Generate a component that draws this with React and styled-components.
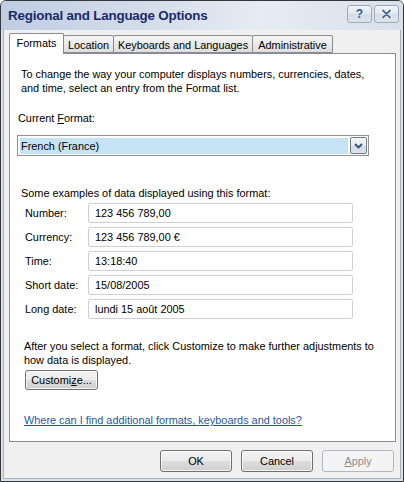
import React from "react";
import styled, { createGlobalStyle } from "styled-components";

const Global = createGlobalStyle`
  html, body { margin: 0; padding: 0; background: #ffffff; }
  body { font-family: "Liberation Sans", Arial, sans-serif; font-size: 10.9px; color: #000; }
  * { box-sizing: border-box; }
`;

const Window = styled.div`
  width: 404px;
  height: 482px;
  border: 1px solid #34383d;
  border-radius: 6px 6px 0 0;
  background: #d9e1eb;
  padding: 0 2px 2px 2px;
  display: flex;
  flex-direction: column;
  overflow: hidden;
`;

const TitleBar = styled.div`
  height: 29px;
  margin: 0 -2px;
  padding: 4px 4px 0 7px;
  display: flex;
  align-items: flex-start;
  justify-content: space-between;
  background: linear-gradient(90deg, #bfcde3 0%, #d3dcea 35%, #e7ecf3 65%, #d7e0eb 100%);
`;

const Title = styled.div`
  margin-top: 2px;
  font-size: 13.4px;
  line-height: 17px;
  font-weight: bold;
  letter-spacing: -0.2px;
  color: #1c2b66;
  white-space: nowrap;
`;

const Caption = styled.div`
  display: flex;
  gap: 2px;
`;

const CapButton = styled.div`
  width: 25px;
  height: 18px;
  border: 1px solid #9ea9b8;
  border-radius: 3px;
  background: linear-gradient(180deg, #f1f4f8 0%, #e1e7ef 50%, #d4dce7 51%, #dde4ec 100%);
  display: flex;
  align-items: center;
  justify-content: center;
  font-size: 12px;
  font-weight: bold;
  color: #2a5aa8;
  line-height: 1;
`;

const Client = styled.div`
  flex: 1;
  background: #f0f0f0;
  border: 1px solid #a9b2bd;
  border-top: none;
  padding: 3px 4px 6px 5px;
  display: flex;
  flex-direction: column;
`;

const TabRow = styled.div`
  display: flex;
  align-items: flex-end;
  height: 21px;
  margin-bottom: -1px;
  position: relative;
  z-index: 1;
`;

const Tab = styled.div`
  width: ${(p) => p.$w}px;
  height: ${(p) => (p.$active ? 21 : 18)}px;
  margin-bottom: ${(p) => (p.$active ? 0 : 1)}px;
  margin-left: ${(p) => (p.$first ? 0 : -1)}px;
  border: 1px solid #898c95;
  border-bottom: ${(p) => (p.$active ? "none" : "1px solid #898c95")};
  border-radius: 2px 2px 0 0;
  background: ${(p) =>
    p.$active ? "#ffffff" : "linear-gradient(180deg, #f5f5f5 0%, #ebebeb 50%, #dedede 100%)"};
  position: relative;
  z-index: ${(p) => (p.$active ? 2 : 1)};
  padding-top: 2px;
  text-align: center;
  line-height: 14px;
  white-space: nowrap;
`;

const Panel = styled.div`
  height: 389px;
  background: #ffffff;
  border: 1px solid #898c95;
  display: flex;
  flex-direction: column;
  align-items: flex-start;
`;

const Text = styled.div`
  margin-top: ${(p) => p.$mt}px;
  margin-left: ${(p) => p.$ml}px;
  line-height: 14px;
  white-space: nowrap;
`;

const Combo = styled.div`
  margin-top: 10px;
  margin-left: 7px;
  width: 352px;
  height: 21px;
  border: 1px solid #8e9196;
  background: #fff;
  padding: 1px 1px 1px 2px;
  display: flex;
  align-items: stretch;
  gap: 2px;
`;

const ComboValue = styled.div`
  flex: 1;
  margin-top: 1px;
  background: #c6e3f6;
  padding-left: 1px;
  line-height: 16px;
`;

const ComboArrow = styled.div`
  width: 17px;
  border: 1px solid #6f7c8c;
  border-radius: 2px;
  background: linear-gradient(180deg, #f6f7f9 0%, #e7eaee 50%, #d1d6dd 51%, #dfe3e8 100%);
  display: flex;
  align-items: center;
  justify-content: center;
`;

const Fields = styled.div`
  margin-top: 3px;
  margin-left: 15px;
  display: flex;
  flex-direction: column;
  gap: 4px;
`;

const FieldRow = styled.div`
  display: flex;
  align-items: center;
`;

const FieldLabel = styled.div`
  width: 63px;
  white-space: nowrap;
`;

const FieldBox = styled.div`
  width: 265px;
  height: 20px;
  border: 1px solid #cdd0d5;
  border-radius: 2px;
  background: #fff;
  padding-left: 6px;
  line-height: 18px;
  white-space: nowrap;
`;

const Button = styled.div`
  width: ${(p) => p.$w}px;
  height: ${(p) => p.$h}px;
  margin-top: ${(p) => p.$mt || 0}px;
  margin-left: ${(p) => p.$ml || 0}px;
  border: 1px solid ${(p) => (p.$disabled ? "#b4b8bc" : "#707070")};
  border-radius: 3px;
  background: ${(p) =>
    p.$disabled
      ? "#f4f4f4"
      : "linear-gradient(180deg, #f3f3f3 0%, #ebebeb 48%, #dddddd 52%, #cfcfcf 100%)"};
  box-shadow: inset 0 0 0 1px ${(p) => (p.$disabled ? "#f4f4f4" : "rgba(255,255,255,0.75)")};
  color: ${(p) => (p.$disabled ? "#8d8d8d" : "#000")};
  display: flex;
  align-items: center;
  justify-content: center;
  white-space: nowrap;
`;

const Link = styled.div`
  margin-top: 23px;
  margin-left: 14px;
  line-height: 14px;
  color: #1f56a6;
  text-decoration: underline;
  white-space: nowrap;
`;

const ButtonRow = styled.div`
  margin-top: 8px;
  display: flex;
  justify-content: flex-end;
  gap: 9px;
  padding-right: 2px;
`;

const fields = [
  ["Number:", "123 456 789,00"],
  ["Currency:", "123 456 789,00 €"],
  ["Time:", "13:18:40"],
  ["Short date:", "15/08/2005"],
  ["Long date:", "lundi 15 août 2005"],
];

const tabs = [
  { label: "Formats", w: 55, active: true },
  { label: "Location", w: 51 },
  { label: "Keyboards and Languages", w: 140 },
  { label: "Administrative", w: 81 },
];

export default function App() {
  return (
    <>
      <Global />
      <Window>
        <TitleBar>
          <Title>Regional and Language Options</Title>
          <Caption>
            <CapButton>?</CapButton>
            <CapButton>
              <svg width="11" height="10" viewBox="0 0 11 10">
                <path d="M2 1.5 L9 8.5 M9 1.5 L2 8.5" stroke="#ffffff" strokeWidth="3.6" strokeLinecap="round" />
                <path d="M2 1.5 L9 8.5 M9 1.5 L2 8.5" stroke="#4a6a98" strokeWidth="2" strokeLinecap="round" />
              </svg>
            </CapButton>
          </Caption>
        </TitleBar>
        <Client>
          <TabRow>
            {tabs.map((t, i) => (
              <Tab key={t.label} $w={t.w} $active={t.active} $first={i === 0}>
                {t.label}
              </Tab>
            ))}
          </TabRow>
          <Panel>
            <Text $mt={13} $ml={11}>
              To change the way your computer displays numbers, currencies, dates,
              <br />
              and time, select an entry from the Format list.
            </Text>
            <Text $mt={16} $ml={8}>
              Current <u>F</u>ormat:
            </Text>
            <Combo>
              <ComboValue>French (France)</ComboValue>
              <ComboArrow>
                <svg width="9" height="6" viewBox="0 0 9 6">
                  <path d="M1 1 L4.5 4.5 L8 1" fill="none" stroke="#2f4d7e" strokeWidth="1.8" />
                </svg>
              </ComboArrow>
            </Combo>
            <Text $mt={30} $ml={11}>
              Some examples of data displayed using this format:
            </Text>
            <Fields>
              {fields.map(([l, v]) => (
                <FieldRow key={l}>
                  <FieldLabel>{l}</FieldLabel>
                  <FieldBox>{v}</FieldBox>
                </FieldRow>
              ))}
            </Fields>
            <Text $mt={20} $ml={14}>
              After you select a format, click Customize to make further adjustments to
              <br />
              how data is displayed.
            </Text>
            <Button $w={73} $h={20} $mt={3} $ml={15}>
              Customi<u>z</u>e...
            </Button>
            <Link>Where can I find additional formats, keyboards and tools?</Link>
          </Panel>
          <ButtonRow>
            <Button $w={72} $h={22}>OK</Button>
            <Button $w={72} $h={22}>Cancel</Button>
            <Button $w={72} $h={22} $disabled>
              <u>A</u>pply
            </Button>
          </ButtonRow>
        </Client>
      </Window>
    </>
  );
}
